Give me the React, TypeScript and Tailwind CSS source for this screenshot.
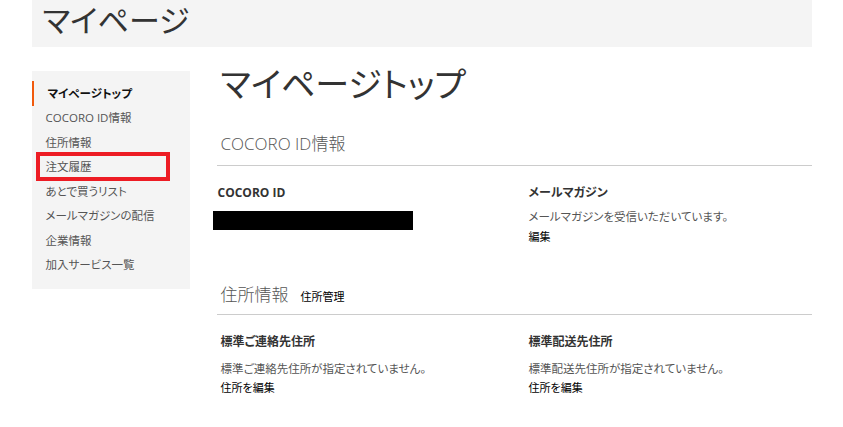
import React from "react";

const font = { fontFamily: '"Open Sans", "Noto Sans CJK JP", sans-serif' };

const navItems = [
  "マイページトップ",
  "COCORO ID情報",
  "住所情報",
  "注文履歴",
  "あとで買うリスト",
  "メールマガジンの配信",
  "企業情報",
  "加入サービス一覧",
];

export default function App() {
  return (
    <div
      className="w-[843px] h-[427px] bg-white overflow-hidden [font-feature-settings:'palt']"
      style={font}
    >
      <div className="mx-auto w-[780px]">
        <div className="h-[47px] bg-[#f4f4f4] pl-[11px] flex items-start">
          <h1 className="text-[31px] leading-none text-[#333] mt-[5px] font-normal">マイページ</h1>
        </div>
        <div className="flex mt-[24px]">
          <nav className="w-[158px] bg-[#f4f4f4] pt-[10px] pb-[12px] self-start">
            {navItems.map((t, i) => (
              <div
                key={t}
                className={
                  "relative h-[24.5px] flex items-center pl-[14px] text-[11.5px] " +
                  (i === 0
                    ? "font-bold text-[#111] border-l-2 border-[#f15a0d]"
                    : "text-[#555]") +
                  (i === 0 ? " pl-[12px]" : "")
                }
              >
                {t}
                {i === 3 && (
                  <div className="absolute left-[4px] top-[-3px] w-[134px] h-[29px] border-4 border-[#ed1c24]" />
                )}
              </div>
            ))}
          </nav>
          <main className="ml-[27px] flex-1">
            <h2 className="text-[34px] leading-[38px] text-[#333] -mt-[6px] pl-[4px]">マイページトップ</h2>
            <div className="mt-[29px] pl-[4px] text-[17px] text-[#555] font-light leading-[24px]">COCORO ID情報</div>
            <div className="mt-[9px] border-t border-[#ccc]" />
            <div className="grid grid-cols-[312px_1fr] mt-[18px]">
              <div>
                <div className="text-[12px] font-bold text-[#333] leading-[18px] pl-[1px]">COCORO ID</div>
                <div className="mt-[9px] -ml-[4px] w-[200px] h-[19px] bg-black" />
              </div>
              <div>
                <div className="text-[12px] font-bold text-[#333] leading-[18px]">メールマガジン</div>
                <div className="mt-[6px] text-[11.5px] text-[#555] leading-[18px]">メールマガジンを受信いただいています。</div>
                <div className="mt-[3px] text-[11px] text-black leading-[16px]">編集</div>
              </div>
            </div>
            <div className="mt-[38px] flex items-baseline pl-[4px]">
              <span className="text-[17px] text-[#555] font-light leading-[24px]">住所情報</span>
              <span className="ml-[12px] text-[11px] text-black">住所管理</span>
            </div>
            <div className="mt-[7px] border-t border-[#ccc]" />
            <div className="grid grid-cols-[312px_1fr] mt-[18px] pl-[4px]">
              <div>
                <div className="text-[12px] font-bold text-[#333] leading-[18px]">標準ご連絡先住所</div>
                <div className="mt-[9px] text-[11.5px] text-[#555] leading-[18px]">標準ご連絡先住所が指定されていません。</div>
                <div className="mt-[2px] text-[11px] text-black leading-[16px]">住所を編集</div>
              </div>
              <div className="-ml-[4px]">
                <div className="text-[12px] font-bold text-[#333] leading-[18px]">標準配送先住所</div>
                <div className="mt-[9px] text-[11.5px] text-[#555] leading-[18px]">標準配送先住所が指定されていません。</div>
                <div className="mt-[2px] text-[11px] text-black leading-[16px]">住所を編集</div>
              </div>
            </div>
          </main>
        </div>
      </div>
    </div>
  );
}
